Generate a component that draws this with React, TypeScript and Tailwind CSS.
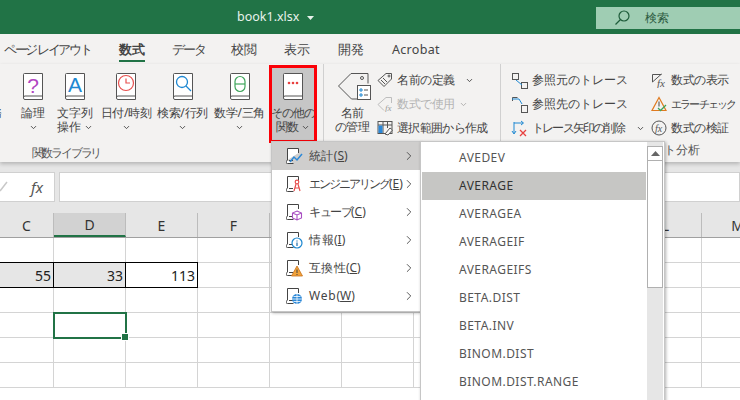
import type { ReactNode } from "react";
import { ChevronDown, ChevronRight } from "lucide-react";

const FONT = "font-['Noto_Sans_CJK_JP','Noto_Sans',sans-serif] [font-feature-settings:'palt']";

function Caret({ className = "" }: { className?: string }) {
  return <ChevronDown className={`w-[9px] h-[9px] text-[#444] ${className}`} strokeWidth={2.4} />;
}

function Book({ children }: { children?: ReactNode }) {
  return (
    <svg width="22" height="29" viewBox="0 0 22 29" className="shrink-0">
      <path d="M1.5 24V2.5a1 1 0 0 1 1-1h18v26H3a1.5 1.5 0 0 1-1.5-1.5z" fill="#fff" stroke="#555" />
      <path d="M1.5 25.5a1.5 1.5 0 0 1 1.5-1.5h17.5" fill="none" stroke="#555" />
      {children}
    </svg>
  );
}

function SmallBook({ children }: { children?: ReactNode }) {
  return (
    <svg width="18" height="18" viewBox="0 0 18 18" className="shrink-0">
      <path d="M1.5 13V1.5h11V6M1.5 13.500a1.500 1.500 0 0 0 0 3h6M3 13.500h4" fill="#fff" stroke="#444" />
      {children}
    </svg>
  );
}

function LargeButton({
  w,
  lines,
  caretLine,
  noCaret,
  icon,
  active,
  tracking = "",
}: {
  w: string;
  lines: string[];
  caretLine?: boolean;
  noCaret?: boolean;
  icon: ReactNode;
  active?: boolean;
  tracking?: string;
}) {
  return (
    <div
      className={`${w} mt-px h-[78px] pt-[7px] shrink-0 flex flex-col items-center text-[12px] leading-[14px] text-[#444] whitespace-nowrap ${
        active ? "bg-[#c6c6c6] outline-[3px] outline-[#fb0007] -outline-offset-[3px]" : ""
      }`}
    >
      {icon}
      <div className={`mt-[5px] flex flex-col items-center ${tracking}`}>
        {lines.map((line, i) => (
          <div key={i} className="flex items-center gap-[3px]">
            {line}
            {caretLine && i === lines.length - 1 && <Caret />}
          </div>
        ))}
        {!caretLine && !noCaret && <Caret className="mt-[3px]" />}
      </div>
    </div>
  );
}

function SmallRow({
  icon,
  label,
  gray,
  caret,
  gap,
  tracking = "",
}: {
  icon: ReactNode;
  label: string;
  gray?: boolean;
  caret?: string;
  gap: string;
  tracking?: string;
}) {
  return (
    <div className={`h-[24px] flex items-center text-[12px] whitespace-nowrap ${gray ? "text-[#b4b4b4]" : "text-[#444]"}`}>
      <div className={`${gap} shrink-0 flex items-center`}>{icon}</div>
      <span className={tracking}>{label}</span>
      {caret && <Caret className={caret} />}
    </div>
  );
}

function GroupLabel({ children, tracking = "" }: { children: ReactNode; tracking?: string }) {
  return <div className={`h-[18px] text-center text-[12px] leading-[16px] text-[#555] whitespace-nowrap ${tracking}`}>{children}</div>;
}

const tabs = [
  { label: "ページ レイアウト", w: "w-[115px]", tracking: "tracking-[-2.3px]" },
  { label: "数式", w: "w-[53px]", active: true, tracking: "" },
  { label: "データ", w: "w-[59px]", tracking: "tracking-[-2px]" },
  { label: "校閲", w: "w-[53px]", tracking: "" },
  { label: "表示", w: "w-[54px]", tracking: "" },
  { label: "開発", w: "w-[54px]", tracking: "" },
  { label: "Acrobat", w: "w-[50px]", tracking: "tracking-[0.3px]" },
];

const menuItems = [
  { jp: "統計", key: "S", tracking: "tracking-[0.4px]", icon: <path d="M4 15l4-5 3 3 5-6" fill="none" stroke="#2b88d8" strokeWidth="1.500" /> },
  {
    jp: "エンジニアリング",
    key: "E",
    tracking: "tracking-[-2px]",
    icon: (
      <g fill="none" stroke="#e8504f" strokeWidth="1.200">
        <circle cx="11" cy="7" r="1.800" />
        <path d="M10 9l-2 7M12 9l2 7M9 13h4" />
      </g>
    ),
  },
  {
    jp: "キューブ",
    key: "C",
    tracking: "tracking-[-1.500px]",
    icon: <path d="M11 8l4.500 2v5L11 17l-4.500-2v-5zM6.500 10l4.500 2 4.500-2M11 12v5" fill="#fff" stroke="#a94fc2" strokeWidth="1.100" />,
  },
  {
    jp: "情報",
    key: "I",
    tracking: "tracking-[0.5px]",
    icon: (
      <g>
        <circle cx="11" cy="12" r="5" fill="#fff" stroke="#1c87d0" strokeWidth="1.200" />
        <path d="M11 9.500v1M11 11.500v3.500" stroke="#1c6fb0" strokeWidth="1.200" />
      </g>
    ),
  },
  {
    jp: "互換性",
    key: "C",
    tracking: "tracking-[0.3px]",
    icon: (
      <g>
        <path d="M11 7l5.500 10h-11z" fill="#f2a33a" stroke="#c8701a" strokeWidth="0.800" />
        <path d="M11 10.500v3.500M11 15v1" stroke="#444" />
      </g>
    ),
  },
  {
    jp: "Web",
    key: "W",
    tracking: "tracking-[0.8px]",
    icon: (
      <g>
        <circle cx="11" cy="12" r="5" fill="#2b88d8" />
        <path d="M6 12h10M11 7v10M7.500 9.500h7M7.500 14.500h7" stroke="#fff" strokeWidth="0.800" />
      </g>
    ),
  },
];

const functions = ["AVEDEV", "AVERAGE", "AVERAGEA", "AVERAGEIF", "AVERAGEIFS", "BETA.DIST", "BETA.INV", "BINOM.DIST", "BINOM.DIST.RANGE"];

// G to K sit behind the open menus, so their letters stay empty
const columns = [
  { id: "c", label: "C", w: "w-[54px]" },
  { id: "d", label: "D", w: "w-[72px]", selected: true },
  { id: "e", label: "E", w: "w-[72px]" },
  { id: "f", label: "F", w: "w-[72px]" },
  { id: "g", label: "", w: "w-[72px]" },
  { id: "h", label: "", w: "w-[72px]" },
  { id: "i", label: "", w: "w-[72px]" },
  { id: "j", label: "", w: "w-[72px]" },
  { id: "k", label: "", w: "w-[72px]" },
  { id: "l", label: "L", w: "w-[72px]" },
  { id: "m", label: "M", w: "w-[72px]" },
];

const rowIndexes = [0, 1, 2, 3, 4, 5];

function Sheet() {
  return (
    <div>
      <div className="flex h-[25px] bg-[#e6e6e6] border-b border-[#a0a0a0]">
        {columns.map((c) => (
          <div
            key={c.id}
            className={`${c.w} shrink-0 flex items-center justify-center text-[14px] font-['Noto_Sans',sans-serif] text-[#333] border-r border-[#bcbcbc] ${
              c.selected ? "bg-[#d2d2d2] border-b-2 border-b-[#217346] text-[#0e6b46]" : ""
            }`}
          >
            {c.label}
          </div>
        ))}
      </div>
      {rowIndexes.map((r) => (
        <div key={r} className="flex items-start h-[25px]">
          {columns.map((c, i) => {
            const data = r === 1 && i < 3;
            const value = data ? ["55", "33", "113"][i] : "";
            const sel = r === 3 && i === 1;
            return (
              <div
                key={c.id}
                className={`${c.w} shrink-0 relative flex items-center justify-end pr-[2px] text-[14px] font-['Noto_Sans',sans-serif] text-[#222] ${
                  data
                    ? `-mt-px h-[26px] border-y border-r border-black ${i < 2 ? "bg-[#e6e6e6]" : "bg-white"}`
                    : "h-[25px] border-b border-r border-[#d4d4d4] bg-white"
                } ${sel ? "outline-2 outline-[#217346] -outline-offset-1 z-10" : ""}`}
              >
                {value}
                {sel && <div className="absolute -right-[3px] -bottom-[3px] w-[6px] h-[6px] bg-[#217346] border border-white box-content -m-px" />}
              </div>
            );
          })}
        </div>
      ))}
    </div>
  );
}

export default function App() {
  return (
    <div className={`relative w-[740px] h-[400px] overflow-hidden bg-white ${FONT}`}>
      {/* title bar */}
      <div className="h-[34px] bg-[#217346] flex items-center pl-[237px] text-white">
        <span className="text-[12.500px] font-['Noto_Sans',sans-serif] text-[#e8f2ec]">book1.xlsx</span>
        <svg width="7" height="4" viewBox="0 0 7 4" className="ml-[8px] mt-[2px]">
          <path d="M0 0h7L3.500 4z" fill="#e8f2ec" />
        </svg>
        <div className="ml-auto w-[144px] h-[22px] mt-px bg-[#9fcdb3] flex items-center pl-[18px] text-[12px] text-[#2b5a40]">
          <svg width="16" height="16" viewBox="0 0 16 16" fill="none" stroke="#1e5c3a" strokeWidth="1.200">
            <circle cx="10" cy="6" r="5" />
            <path d="M6.500 9.500L1.500 14.500" />
          </svg>
          <span className="ml-[15px]">検索</span>
        </div>
      </div>

      {/* tabs */}
      <div className="h-[30px] bg-[#f3f2f1] flex pl-[4px] text-[12.500px] leading-[18px] text-[#444] whitespace-nowrap">
        {tabs.map((t) => (
          <div key={t.label} className={`${t.w} shrink-0 pt-[7px]`}>
            <div className={`w-fit h-[21px] ${t.tracking} ${t.active ? "font-bold border-b-2 border-[#217346]" : ""}`}>{t.label}</div>
          </div>
        ))}
      </div>

      {/* ribbon */}
      <div className="relative z-10 h-[98px] bg-[#f3f2f1] shadow-[0_2px_4px_rgba(0,0,0,0.22)] flex overflow-hidden">
        <div className="w-[324px] shrink-0 border-r border-[#d0d0d0] h-[94px] flex flex-col">
          <div className="flex h-[79px]">
            <LargeButton w="w-[27px] -ml-[24px] mr-[11px]" lines={["財務"]} icon={<Book />} />
            <LargeButton w="w-[38px]" lines={["論理"]} icon={<Book><text x="11" y="21" textAnchor="middle" fontSize="21" fill="#b146c2" fontFamily="Liberation Sans">?</text></Book>} />
            <LargeButton w="w-[45px]" lines={["文字列", "操作"]} caretLine icon={<Book><text x="11" y="20" textAnchor="middle" fontSize="21" fill="#1e88d2" fontFamily="Liberation Sans">A</text></Book>} />
            <LargeButton
              w="w-[58px]"
              lines={["日付/時刻"]}
              tracking="tracking-[-0.3px]"
              icon={
                <Book>
                  <circle cx="11" cy="11" r="7.500" fill="none" stroke="#e8504f" strokeWidth="1.200" />
                  <path d="M11 6.500V11h4" fill="none" stroke="#e8504f" strokeWidth="1.200" />
                </Book>
              }
            />
            <LargeButton
              w="w-[55px]"
              lines={["検索/行列"]}
              tracking="tracking-[-0.2px]"
              icon={
                <Book>
                  <circle cx="10" cy="10" r="5.500" fill="none" stroke="#1e88d2" strokeWidth="1.300" />
                  <path d="M14 14l5 5" stroke="#1e88d2" strokeWidth="1.300" />
                </Book>
              }
            />
            <LargeButton
              w="w-[59px]"
              lines={["数学/三角"]}
              tracking="tracking-[-0.3px]"
              icon={
                <Book>
                  <rect x="6" y="4.500" width="10" height="15" rx="5" fill="none" stroke="#3fa45b" strokeWidth="1.200" />
                  <path d="M6 12h10" stroke="#3fa45b" strokeWidth="1.200" />
                </Book>
              }
            />
            <LargeButton
              w="w-[48px]"
              active
              lines={["その他の", "関数"]}
              tracking="tracking-[-1px]"
              caretLine
              icon={
                <Book>
                  <circle cx="7" cy="11" r="1.300" fill="#e8403f" />
                  <circle cx="11" cy="11" r="1.300" fill="#e8403f" />
                  <circle cx="15" cy="11" r="1.300" fill="#e8403f" />
                </Book>
              }
            />
          </div>
          <div className="mt-[2px] w-[132px]">
            <GroupLabel tracking="tracking-[-2.200px]">関数ライブラリ</GroupLabel>
          </div>
        </div>

        <div className="w-[177px] shrink-0 border-r border-[#d0d0d0] h-[94px] flex">
          <LargeButton
            w="w-[56px] -mr-[3px]"
            lines={["名前", "の管理"]}
            noCaret
            tracking="tracking-[-0.500px]"
            icon={
              <svg width="36" height="29" viewBox="0 0 36 29" fill="none" stroke="#555" className="shrink-0 ml-[6px]">
                <path d="M1.500 14L14 1.500h17v10M1.500 14l13 13h6" />
                <circle cx="25" cy="6" r="1.500" />
                <rect x="20.500" y="13.500" width="13" height="14" fill="#fff" />
                <path d="M23 17h2v2h-2zM23 22h2v2h-2z" stroke="#1e88d2" />
                <path d="M27 18h4M27 23h4" />
              </svg>
            }
          />
          <div className="pt-[4px]">
            <SmallRow
              gap="w-[20px]"
              label="名前の定義"
              tracking="tracking-[-0.500px]"
              caret="ml-[10px]"
              icon={
                <svg width="16" height="16" viewBox="0 0 16 16" fill="none" stroke="#555">
                  <path d="M1 8.500L9 1.500h5.500V7l-7.500 7.500z" />
                  <path d="M4 8l4 4M6 6l4 4" />
                  <circle cx="12" cy="4" r="1" />
                </svg>
              }
            />
            <SmallRow
              gap="w-[20px]"
              gray
              label="数式で使用"
              tracking="tracking-[-0.500px]"
              caret="ml-[4px] opacity-40"
              icon={
                <svg width="16" height="16" viewBox="0 0 16 16" fill="none" stroke="#bdbdbd">
                  <path d="M1 8.500L9 1.500h5.500V7M1 8.500l6 6" />
                  <text x="8" y="15" fontSize="9" fontStyle="italic" fill="#9a9a9a" stroke="none" fontFamily="Liberation Serif">fx</text>
                </svg>
              }
            />
            <SmallRow
              gap="w-[20px]"
              label="選択範囲から作成"
              tracking="tracking-[-0.700px]"
              icon={
                <svg width="16" height="16" viewBox="0 0 16 16" fill="none" stroke="#555">
                  <rect x="1" y="1.500" width="14" height="12" />
                  <path d="M1 5h14M6 1.500v12M10.500 1.500V8" />
                  <rect x="1.500" y="5.500" width="4" height="7.500" fill="#2b88d8" stroke="none" />
                  <path d="M8 14l5-6 2.500 2-4.500 5z" fill="#fff" />
                </svg>
              }
            />
          </div>
        </div>

        <div className="w-[302px] shrink-0 h-[94px] flex flex-col">
          <div className="flex h-[79px] pl-[10px] pt-[4px]">
            <div className="w-[140px] shrink-0">
              <SmallRow
                gap="w-[21px]"
                label="参照元のトレース"
                icon={
                  <svg width="17" height="17" viewBox="0 0 17 17" fill="none" stroke="#555">
                    <rect x="1.500" y="1.500" width="6" height="6" />
                    <rect x="10.500" y="10.500" width="6" height="6" />
                    <path d="M5 8l6 5" stroke="#1e88d2" />
                  </svg>
                }
              />
              <SmallRow
                gap="w-[21px]"
                label="参照先のトレース"
                icon={
                  <svg width="17" height="17" viewBox="0 0 17 17" fill="none" stroke="#555">
                    <path d="M1.500 5V1.500h5" />
                    <rect x="10.500" y="9.500" width="6" height="7" />
                    <path d="M1 3h7l3 5" stroke="#1e88d2" />
                  </svg>
                }
              />
              <SmallRow
                gap="w-[21px]"
                label="トレース矢印の削除"
                tracking="tracking-[-1.800px]"
                caret="ml-[12px]"
                icon={
                  <svg width="17" height="17" viewBox="0 0 17 17" fill="none">
                    <path d="M3 2v11M1 11l2 3 2-3M3 3h9M10 1l2.500 2L10 5" stroke="#1e88d2" />
                    <path d="M9 10l6 6M15 10l-6 6" stroke="#e8403f" strokeWidth="1.300" />
                  </svg>
                }
              />
            </div>
            <div>
              <SmallRow
                gap="w-[20px]"
                label="数式の表示"
                tracking="tracking-[-0.500px]"
                icon={
                  <svg width="16" height="16" viewBox="0 0 16 16" fill="none" stroke="#555">
                    <path d="M1.500 10V2.500h9M1.500 10l9-8" />
                    <text x="6" y="15" fontSize="11" fontStyle="italic" fill="#555" stroke="none" fontFamily="Liberation Serif">fx</text>
                  </svg>
                }
              />
              <SmallRow
                gap="w-[20px]"
                label="エラー チェック"
                tracking="text-[11px] tracking-[-2px]"
                icon={
                  <svg width="16" height="16" viewBox="0 0 16 16" fill="none">
                    <path d="M8 1.500l7 13H1z" stroke="#e07a1f" strokeWidth="1.200" />
                    <path d="M8 5.500v5" stroke="#444" />
                    <path d="M7 12l2.500 2.500L15 9" stroke="#3fa45b" strokeWidth="1.300" />
                  </svg>
                }
              />
              <SmallRow
                gap="w-[20px]"
                label="数式の検証"
                tracking="tracking-[-0.500px]"
                icon={
                  <svg width="16" height="16" viewBox="0 0 16 16" fill="none" stroke="#555">
                    <circle cx="8" cy="8" r="7" />
                    <text x="4" y="12" fontSize="10" fontStyle="italic" fill="#555" stroke="none" fontFamily="Liberation Serif">fx</text>
                  </svg>
                }
              />
            </div>
          </div>
          <div className="mt-[2px]">
            <GroupLabel>ワークシート分析</GroupLabel>
          </div>
        </div>
      </div>

      {/* formula bar */}
      <div className="h-[51px] bg-[#e6e6e6] pt-[10px] flex">
        <div className="w-[55px] h-[30px] bg-white border-y border-r border-[#d0d0d0] flex items-center shrink-0">
          <svg width="8" height="12" viewBox="0 0 8 12" className="shrink-0">
            <path d="M0 10l7-9" stroke="#c8c8c8" strokeWidth="1.500" fill="none" />
          </svg>
          <span className="ml-[23px] font-['Liberation_Serif',serif] italic text-[15px] text-[#555]">fx</span>
        </div>
        <div className="ml-[4px] flex-1 h-[30px] bg-white border border-[#d0d0d0]" />
      </div>

      <Sheet />

      {/* 関数 menu */}
      <div className="absolute z-20 left-[271px] top-[141px] w-[150px] h-[171px] bg-white border border-[#c6c6c6] shadow-[1px_1px_3px_rgba(0,0,0,0.3)] text-[12px] text-[#444]">
        {menuItems.map((m, i) => (
          <div key={m.jp} className={`h-[28px] flex items-center pl-[14px] whitespace-nowrap ${i === 0 ? "bg-[#cfcecd]" : ""}`}>
            <SmallBook>{m.icon}</SmallBook>
            <span className="ml-[5px]">
              <span className={m.tracking}>{m.jp}</span>(<span className="underline">{m.key}</span>)
            </span>
            <ChevronRight className="absolute right-[4px] w-[14px] h-[14px] text-[#444]" strokeWidth={1.500} />
          </div>
        ))}
      </div>

      {/* function list */}
      <div className="absolute z-20 left-[420px] top-[141px] w-[245px] h-[270px] bg-white border border-[#c6c6c6] shadow-[1px_1px_3px_rgba(0,0,0,0.3)] flex">
        <div className="w-[224px] ml-px pt-[2px] shrink-0 text-[12px] text-[#555] font-['Noto_Sans',sans-serif] tracking-[0.45px]">
          {functions.map((f) => (
            <div key={f} className={`h-[28px] flex items-center pl-[37px] ${f === "AVERAGE" ? "bg-[#c6c6c4] text-[#333]" : ""}`}>
              {f}
            </div>
          ))}
        </div>
        <div className="ml-px w-[16px] bg-[#e6e6e6] flex flex-col pt-[4px] items-stretch">
          <div className="h-[15px] bg-white border border-[#b0b0b0] flex items-center justify-center">
            <svg width="9" height="5" viewBox="0 0 9 5">
              <path d="M4.500 0L9 5H0z" fill="#666" />
            </svg>
          </div>
          <div className="h-[127px] bg-white border border-t-0 border-[#b0b0b0]" />
        </div>
      </div>
    </div>
  );
}
